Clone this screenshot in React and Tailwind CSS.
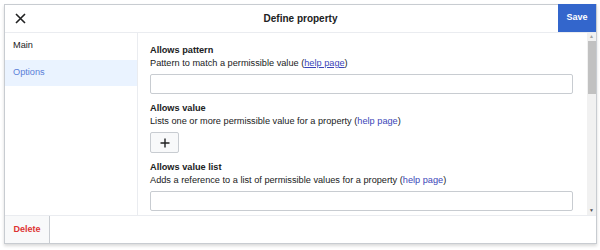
import React from 'react';

// Define property dialog (OOUI-style), options panel selected
const fields = [
  { title: 'Allows pattern', desc: 'Pattern to match a permissible value', kind: 'input', underline: true },
  { title: 'Allows value', desc: 'Lists one or more permissible value for a property', kind: 'add' },
  { title: 'Allows value list', desc: 'Adds a reference to a list of permissible values for a property', kind: 'input' },
];

const Field = ({ f, first }) => (
  <div className={first ? '' : 'mt-[8px]'}>
    <div className="font-bold leading-[13px] text-[9.2px] text-[#202122]">{f.title}</div>
    <div className="leading-[13px] text-[9.2px] text-[#202122]">
      {f.desc} (<span className={`text-[#3a45b8] ${f.underline ? 'underline' : ''}`}>help page</span>)
    </div>
    {f.kind === 'input' ? (
      <div className="mt-[4px] h-[20px] w-[423px] border border-[#c8ccd1] rounded-[2px] bg-white" />
    ) : (
      <div className="mt-[4px] h-[21px] w-[29px] border border-[#c8ccd1] rounded-[2px] bg-[#f8f9fa] flex items-center justify-center">
        <svg width="10" height="10" viewBox="0 0 10 10">
          <path d="M5 0.5v9M0.5 5h9" stroke="#202122" strokeWidth="1.4" />
        </svg>
      </div>
    )}
  </div>
);

export default function App() {
  return (
    <div className="w-[600px] h-[250px] bg-white overflow-hidden pt-[4px] pl-[4px]" style={{ fontFamily: '"Liberation Sans", Arial, sans-serif' }}>
      <div className="w-[593px] h-[240px] border border-[#c8ccd1] bg-white flex flex-col shadow-[0_2px_3px_rgba(0,0,0,0.15)]">
        {/* HEADER */}
        <div className="h-[28px] border-b border-[#eaecf0] grid grid-cols-[38px_1fr_38px] items-stretch">
          <div className="flex items-center pl-[10px]">
            <svg width="11" height="11" viewBox="0 0 11 11">
              <path d="M1 1l9 9M10 1l-9 9" stroke="#202122" strokeWidth="1.6" />
            </svg>
          </div>
          <div className="flex items-center justify-center font-bold text-[10px] text-[#202122]">Define property</div>
          <div className="-mt-[1px] bg-[#3366cc] flex items-center justify-center font-bold text-[9px] text-white">Save</div>
        </div>

        {/* BODY */}
        <div className="h-[182px] flex">
          <div className="w-[133px] border-r border-[#eaecf0] text-[9.2px] text-[#202122]">
            <div className="h-[27px] flex items-center pl-[8px] pb-[2px]">Main</div>
            <div className="h-[26px] flex items-center pl-[8px] bg-[#eaf3ff] text-[#5a7fd8]">Options</div>
          </div>
          <div className="w-[449px] pl-[12px] pt-[11px]">
            {fields.map((f, i) => (
              <Field key={f.title} f={f} first={i === 0} />
            ))}
          </div>
          {/* scrollbar */}
          <div className="w-[9px] bg-[#f1f1f1] flex flex-col items-center">
            <div className="h-[8px] flex items-center justify-center text-[5px] text-[#a3a3a3]">▲</div>
            <div className="w-[8px] h-[53px] bg-[#c1c1c1]" />
            <div className="flex-1" />
            <div className="h-[8px] flex items-center justify-center text-[5px] text-[#505050]">▼</div>
          </div>
        </div>

        {/* FOOTER */}
        <div className="h-[28px] border-t border-[#eaecf0] flex">
          <div className="w-[45px] border-r border-[#c8ccd1] bg-[#f8f9fa] flex items-center justify-center font-bold text-[9px] text-[#d33]">
            Delete
          </div>
        </div>
      </div>
    </div>
  );
}
